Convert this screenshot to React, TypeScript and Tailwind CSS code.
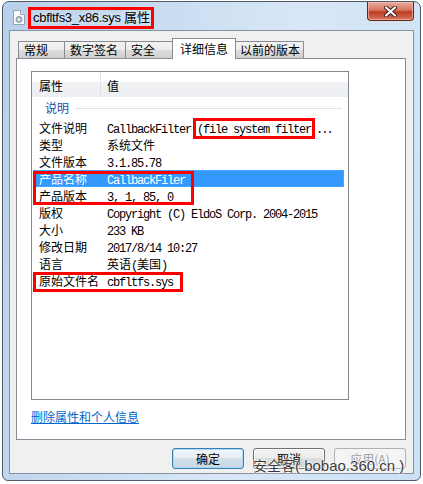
import type { ReactNode } from 'react';

const cjk = "font-['Noto_Sans_CJK_SC','Microsoft_YaHei',sans-serif]";

// splits a value into CJK runs and monospace runs (SimSun-like look)
function Mixed({ text }: { text: string }) {
  const parts = text.split(/([\u4e00-\u9fff]+)/).filter(Boolean);
  return (
    <>
      {parts.map((p, i) =>
        /[\u4e00-\u9fff]/.test(p) ? (
          <span key={i} className={`${cjk} text-[12px] tracking-normal`}>
            {p}
          </span>
        ) : (
          <span key={i} className="font-['Liberation_Mono',monospace] text-[12px] tracking-[-1.2px]">
            {p}
          </span>
        )
      )}
    </>
  );
}

type Row = { label: string; value: ReactNode; selected?: boolean };

const rows: Row[] = [
  {
    label: '文件说明',
    value: (
      <>
        <Mixed text="CallbackFilter (file system filter" />
        <span className="ml-[5px] font-['Liberation_Mono',monospace] text-[12px] tracking-[-2px]">...</span>
      </>
    ),
  },
  { label: '类型', value: <Mixed text="系统文件" /> },
  { label: '文件版本', value: <Mixed text="3.1.85.78" /> },
  { label: '产品名称', value: <Mixed text="CallbackFiler" />, selected: true },
  { label: '产品版本', value: <Mixed text="3, 1, 85, 0" /> },
  { label: '版权', value: <Mixed text="Copyright (C) EldoS Corp. 2004-2015" /> },
  { label: '大小', value: <Mixed text="233 KB" /> },
  { label: '修改日期', value: <Mixed text="2017/8/14 10:27" /> },
  { label: '语言', value: <Mixed text="英语(美国)" /> },
  { label: '原始文件名', value: <Mixed text="cbfltfs.sys" /> },
];

function Tab({ label, w, first, selected }: { label: string; w: string; first?: boolean; selected?: boolean }) {
  if (selected) {
    return (
      <div
        className={`relative z-10 -mb-px -ml-[2px] flex h-[21px] ${w} items-center border border-b-0 border-[#898c95] bg-white pl-[7px] text-[12px]`}
      >
        {label}
      </div>
    );
  }
  return (
    <div
      className={`${first ? '' : '-ml-px'} flex h-[17px] ${w} items-center border border-b-0 border-[#898c95] bg-[linear-gradient(#f3f3f3,#ebebeb_50%,#dddddd_50%,#cfcfcf)] pl-[5px] text-[12px]`}
    >
      {label}
    </div>
  );
}

function FileIcon() {
  return (
    <svg width="12" height="15" viewBox="0 0 12 15">
      <path d="M0.5 0.5h7l4 4v10h-11z" fill="#fafbfc" stroke="#9aa3ad" />
      <path d="M7.5 0.5v4h4" fill="#e3e7ec" stroke="#9aa3ad" />
      <circle cx="6" cy="9.5" r="3" fill="#b9c6d4" stroke="#6f8196" strokeWidth="0.8" />
      <circle cx="6" cy="9.5" r="1" fill="#ffffff" />
    </svg>
  );
}

export default function App() {
  return (
    <div className={`relative h-[484px] w-[423px] overflow-hidden bg-white text-black ${cjk}`}>
      {/* window */}
      <div className="ml-[2px] mt-[1px] flex h-[480px] w-[419px] flex-col rounded-t-[7px] rounded-b-[6px] border border-[#4e5b6a] bg-[linear-gradient(100deg,#b8d0ea,#d8e7f6_60%,#cde0f3)]">
        {/* title bar */}
        <div className="flex h-[28px]">
          <div className="flex items-center pl-[10px] pt-[2px]">
            <FileIcon />
            <span className="ml-[8px] whitespace-pre text-[13px] [text-shadow:0_0_6px_#ffffff]">
              <span className="font-['Liberation_Sans',sans-serif] tracking-[-0.3px]">cbfltfs3_x86.sys </span>
              <span>属性</span>
            </span>
          </div>
          <div className="flex-1" />
          <div className="mr-[6px] flex h-[19px] w-[47px] items-center justify-center rounded-b-[4px] border border-t-0 border-[#6d2117] bg-[linear-gradient(#e9ab9b,#d7765f_45%,#c13a20_55%,#d4785f)] shadow-[inset_0_0_0_1px_rgba(255,200,190,0.6)]">
            <svg width="13" height="11" viewBox="0 0 13 11">
              <path d="M2 1.5l9 8M11 1.5l-9 8" stroke="#3a1c18" strokeWidth="4" strokeLinecap="round" />
              <path d="M2 1.5l9 8M11 1.5l-9 8" stroke="#ffffff" strokeWidth="2.2" strokeLinecap="round" />
            </svg>
          </div>
        </div>

        {/* client area */}
        <div className="ml-[6px] flex h-[444px] w-[405px] flex-col border border-[#8593a4] bg-[#f0f0f0] pt-[7px]">
          <div className="relative z-10 ml-[8px] flex h-[20px] items-end">
            <Tab label="常规" w="w-[47px]" first />
            <Tab label="数字签名" w="w-[62px]" />
            <Tab label="安全" w="w-[49px]" />
            <Tab label="详细信息" w="w-[64px]" selected />
            <div className="-ml-[2px] flex">
              <Tab label="以前的版本" w="w-[70px]" first />
            </div>
          </div>

          <div className="ml-[6px] flex h-[382px] w-[390px] flex-col border border-[#898c95] bg-white">
            {/* list view */}
            <div className="ml-[14px] mt-[12px] h-[329px] w-[318px] border border-[#828790] bg-white">
              <div className="flex h-[25px] bg-[linear-gradient(#ffffff,#ffffff_38%,#f1f2f4_42%,#eceef1)] text-[12px]">
                <div className="flex w-[69px] items-center border-r border-[#dfe3e8] pl-[7px] pt-[3px]">属性</div>
                <div className="flex items-center pl-[6px] pt-[3px]">值</div>
              </div>
              <div className="flex h-[22px] items-center pl-[13px]">
                <span className="text-[12px] text-[#1e4aa8]">说明</span>
                <div className="ml-[6px] mr-[6px] h-px flex-1 bg-[#dce4ee]" />
              </div>
              {rows.map((r) => (
                <div
                  key={r.label}
                  className={`ml-[1px] mr-[4px] flex h-[17px] items-baseline whitespace-pre leading-[17px] ${
                    r.selected
                      ? 'bg-[#3399ff] text-white outline-1 -outline-offset-1 outline-dotted outline-[#c99a5a]'
                      : ''
                  }`}
                >
                  <div className="w-[74px] pl-[6px] text-[12px]">{r.label}</div>
                  <div className="flex items-baseline">{r.value}</div>
                </div>
              ))}
            </div>
            <div className="ml-[14px] mt-[9px] self-start text-[12px] leading-[16px] text-[#0066cc] underline">
              删除属性和个人信息
            </div>
          </div>

          {/* buttons */}
          <div className="ml-[6px] mt-[8px] flex w-[390px] justify-end gap-[9px] text-[12px]">
            <div className="flex h-[21px] w-[72px] items-center justify-center rounded-[3px] border border-[#3c7fb1] bg-[linear-gradient(#f2f7fb,#e5edf3_50%,#d2e0ea_50%,#c7d8e4)] shadow-[inset_0_0_0_1px_#a6dcf8]">
              确定
            </div>
            <div className="flex h-[21px] w-[72px] items-center justify-center rounded-[3px] border border-[#707070] bg-[linear-gradient(#f2f2f2,#ebebeb_50%,#dddddd_50%,#cfcfcf)] shadow-[inset_0_0_0_1px_#fcfcfc]">
              取消
            </div>
            <div className="flex h-[21px] w-[72px] items-center justify-center rounded-[3px] border border-[#adb2b5] bg-[#f4f4f4] text-[#a0a0a0]">
              应用(A)
            </div>
          </div>
        </div>
      </div>

      {/* annotation boxes */}
      <div className="absolute left-[28px] top-[7px] h-[22px] w-[126px] border-[3px] border-[#ff0000]" />
      <div className="absolute left-[193px] top-[118px] h-[21px] w-[122px] border-[3px] border-[#ff0000]" />
      <div className="absolute left-[33px] top-[171px] h-[34px] w-[161px] border-[3px] border-[#ff0000]" />
      <div className="absolute left-[33px] top-[272px] h-[20px] w-[150px] border-[3px] border-[#ff0000]" />

      {/* watermark */}
      <div className="absolute left-[253px] top-[452px] whitespace-pre text-[#3b3b3b] [text-shadow:0_0_2px_#ffffff,0_0_1px_#ffffff,0_0_3px_#ffffff]">
        <span className="text-[14px]">安全客</span>
        <span className="font-['Liberation_Sans',sans-serif] text-[15px]">( bobao.360.cn )</span>
      </div>
    </div>
  );
}
